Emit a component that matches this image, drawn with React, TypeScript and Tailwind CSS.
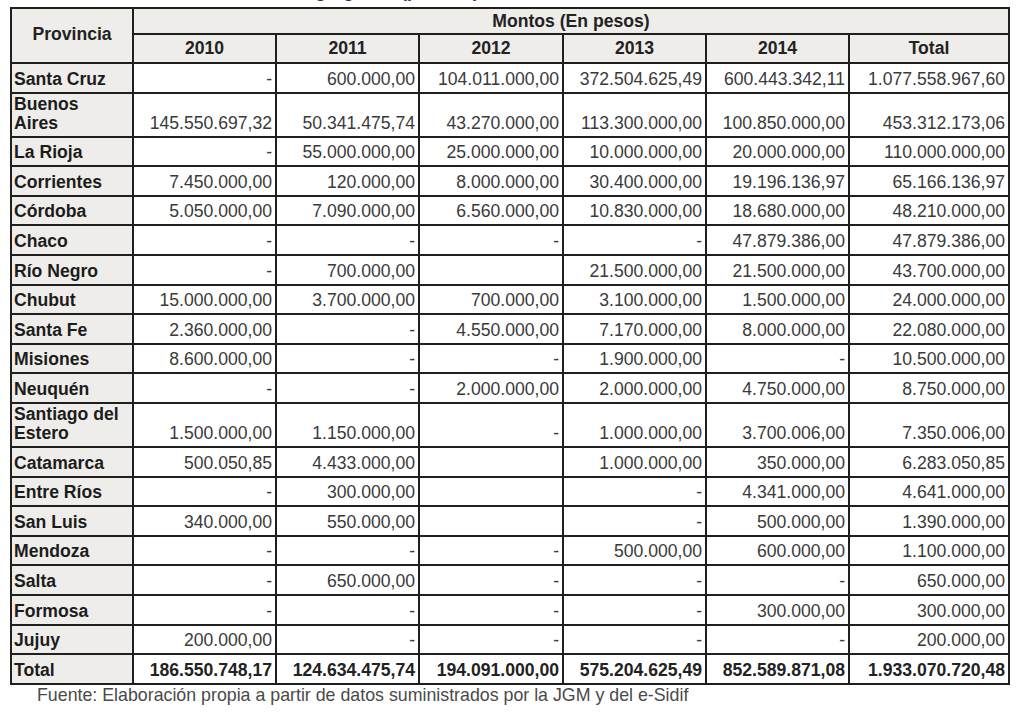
import React from "react";

type Row = {
    provincia: string[];
    values: string[];
    tall?: boolean;
};

const years = ["2010", "2011", "2012", "2013", "2014", "Total"];

const rows: Row[] = [
    { provincia: ["Santa Cruz"], values: ["-", "600.000,00", "104.011.000,00", "372.504.625,49", "600.443.342,11", "1.077.558.967,60"] },
    { provincia: ["Buenos", "Aires"], tall: true, values: ["145.550.697,32", "50.341.475,74", "43.270.000,00", "113.300.000,00", "100.850.000,00", "453.312.173,06"] },
    { provincia: ["La Rioja"], values: ["-", "55.000.000,00", "25.000.000,00", "10.000.000,00", "20.000.000,00", "110.000.000,00"] },
    { provincia: ["Corrientes"], values: ["7.450.000,00", "120.000,00", "8.000.000,00", "30.400.000,00", "19.196.136,97", "65.166.136,97"] },
    { provincia: ["Córdoba"], values: ["5.050.000,00", "7.090.000,00", "6.560.000,00", "10.830.000,00", "18.680.000,00", "48.210.000,00"] },
    { provincia: ["Chaco"], values: ["-", "-", "-", "-", "47.879.386,00", "47.879.386,00"] },
    { provincia: ["Río Negro"], values: ["-", "700.000,00", "", "21.500.000,00", "21.500.000,00", "43.700.000,00"] },
    { provincia: ["Chubut"], values: ["15.000.000,00", "3.700.000,00", "700.000,00", "3.100.000,00", "1.500.000,00", "24.000.000,00"] },
    { provincia: ["Santa Fe"], values: ["2.360.000,00", "-", "4.550.000,00", "7.170.000,00", "8.000.000,00", "22.080.000,00"] },
    { provincia: ["Misiones"], values: ["8.600.000,00", "-", "-", "1.900.000,00", "-", "10.500.000,00"] },
    { provincia: ["Neuquén"], values: ["-", "-", "2.000.000,00", "2.000.000,00", "4.750.000,00", "8.750.000,00"] },
    { provincia: ["Santiago del", "Estero"], tall: true, values: ["1.500.000,00", "1.150.000,00", "-", "1.000.000,00", "3.700.006,00", "7.350.006,00"] },
    { provincia: ["Catamarca"], values: ["500.050,85", "4.433.000,00", "", "1.000.000,00", "350.000,00", "6.283.050,85"] },
    { provincia: ["Entre Ríos"], values: ["-", "300.000,00", "", "-", "4.341.000,00", "4.641.000,00"] },
    { provincia: ["San Luis"], values: ["340.000,00", "550.000,00", "", "-", "500.000,00", "1.390.000,00"] },
    { provincia: ["Mendoza"], values: ["-", "-", "-", "500.000,00", "600.000,00", "1.100.000,00"] },
    { provincia: ["Salta"], values: ["-", "650.000,00", "-", "-", "-", "650.000,00"] },
    { provincia: ["Formosa"], values: ["-", "-", "-", "-", "300.000,00", "300.000,00"] },
    { provincia: ["Jujuy"], values: ["200.000,00", "-", "-", "-", "-", "200.000,00"] },
];

const totals = ["186.550.748,17", "124.634.475,74", "194.091.000,00", "575.204.625,49", "852.589.871,08", "1.933.070.720,48"];

const cell = "border-2 border-[#1f1f1f] align-bottom";

const App: React.FC = () => {
    return (
        <div
            className="w-[1022px] h-[720px] bg-white overflow-hidden text-[#222]"
            style={{ fontFamily: '"Liberation Sans", Arial, sans-serif' }}
        >
            {/* title of the page above, mostly cut off in the shot */}
            <div className="h-[7px] overflow-hidden pl-[236px]">
                <div className="mt-[-18px] text-[18px] leading-[18px] font-bold whitespace-nowrap text-[#333]">
                    Montos agregados (por año)
                </div>
            </div>

            <table className="ml-[10px] border-collapse table-fixed w-[998px] text-[17.6px] leading-[19px]">
                <colgroup>
                    <col className="w-[122px]" />
                    <col className="w-[143px]" />
                    <col className="w-[143px]" />
                    <col className="w-[144px]" />
                    <col className="w-[143px]" />
                    <col className="w-[143px]" />
                    <col className="w-[160px]" />
                </colgroup>
                <thead>
                    <tr className="h-[26px]">
                        <th rowSpan={2} className="border-2 border-[#1f1f1f] bg-[#eeede9] align-middle font-bold text-[#222] pb-[2px]">
                            Provincia
                        </th>
                        <th colSpan={6} className="border-2 border-[#1f1f1f] bg-[#eeede9] font-bold text-[#222] align-middle pt-[1px]">
                            Montos (En pesos)
                        </th>
                    </tr>
                    <tr className="h-[29px]">
                        {years.map((y) => (
                            <th key={y} className="border-2 border-[#1f1f1f] bg-[#eeede9] font-bold text-[#222] align-middle">
                                {y}
                            </th>
                        ))}
                    </tr>
                </thead>
                <tbody>
                    {rows.map((r) => (
                        <tr key={r.provincia.join(" ")} className={r.tall ? "h-[44px]" : "h-[29.6px]"}>
                            <td className={`${cell} bg-[#eeede9] font-bold pl-[2px] pb-[3px] text-[#1c1c1c]`}>
                                {r.provincia.map((p) => (
                                    <div key={p}>{p}</div>
                                ))}
                            </td>
                            {r.values.map((v, i) => (
                                <td key={i} className={`${cell} bg-white text-right pr-[3px] pb-[3px] text-[#3a3a3a]`}>
                                    {v}
                                </td>
                            ))}
                        </tr>
                    ))}
                    <tr className="h-[29.6px]">
                        <td className={`${cell} bg-[#eeede9] font-bold pl-[2px] pb-[3px] text-[#1c1c1c]`}>Total</td>
                        {totals.map((v, i) => (
                            <td key={i} className={`${cell} bg-white text-right font-bold pr-[3px] pb-[3px] text-[#222]`}>
                                {v}
                            </td>
                        ))}
                    </tr>
                </tbody>
            </table>

            <p className="pl-[37px] pt-[1px] text-[17.8px] leading-[19px] text-[#4a4a4a]">
                Fuente: Elaboración propia a partir de datos suministrados por la JGM y del e-Sidif
            </p>
        </div>
    );
};

export default App;
